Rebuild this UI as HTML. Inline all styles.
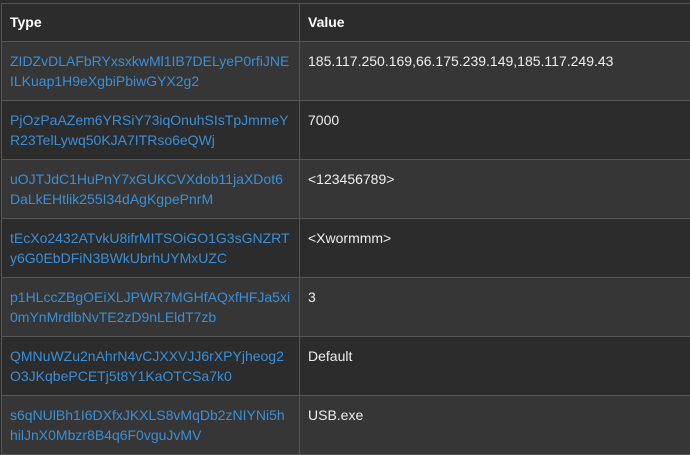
<!DOCTYPE html>
<html><head><style>
html,body{margin:0;padding:0;background:#2c2c2c;width:690px;height:442px;overflow:hidden}
table{position:absolute;left:1px;top:3px;border-collapse:collapse;width:720px;font-family:"Liberation Sans",sans-serif;font-size:14px;color:#eee}
td,th{border:1px solid #555;text-align:left;vertical-align:top;padding:9px 8px;line-height:20px}
th{font-weight:bold;background:#2c2c2c;padding:8px 8px;height:21px;line-height:21px;color:#fff}
td{height:40px}
tr.o td{background:#363636}
tr.e td{background:#2c2c2c}
td.k{width:281px;color:#3a8fd6;word-break:break-all}
</style></head><body>
<table>
<tr><th style="width:281px">Type</th><th>Value</th></tr>
<tr class="o"><td class="k">ZIDZvDLAFbRYxsxkwMl1IB7DELyeP0rfiJNE<br>ILKuap1H9eXgbiPbiwGYX2g2</td><td>185.117.250.169,66.175.239.149,185.117.249.43</td></tr>
<tr class="e"><td class="k">PjOzPaAZem6YRSiY73iqOnuhSIsTpJmmeY<br>R23TelLywq50KJA7ITRso6eQWj</td><td>7000</td></tr>
<tr class="o"><td class="k">uOJTJdC1HuPnY7xGUKCVXdob11jaXDot6<br>DaLkEHtlik255I34dAgKgpePnrM</td><td>&lt;123456789&gt;</td></tr>
<tr class="e"><td class="k">tEcXo2432ATvkU8ifrMITSOiGO1G3sGNZRT<br>y6G0EbDFiN3BWkUbrhUYMxUZC</td><td>&lt;Xwormmm&gt;</td></tr>
<tr class="o"><td class="k">p1HLccZBgOEiXLJPWR7MGHfAQxfHFJa5xi<br>0mYnMrdlbNvTE2zD9nLEldT7zb</td><td>3</td></tr>
<tr class="e"><td class="k">QMNuWZu2nAhrN4vCJXXVJJ6rXPYjheog2<br>O3JKqbePCETj5t8Y1KaOTCSa7k0</td><td>Default</td></tr>
<tr class="o"><td class="k">s6qNUlBh1I6DXfxJKXLS8vMqDb2zNIYNi5h<br>hilJnX0Mbzr8B4q6F0vguJvMV</td><td>USB.exe</td></tr>
</table>
</body></html>
